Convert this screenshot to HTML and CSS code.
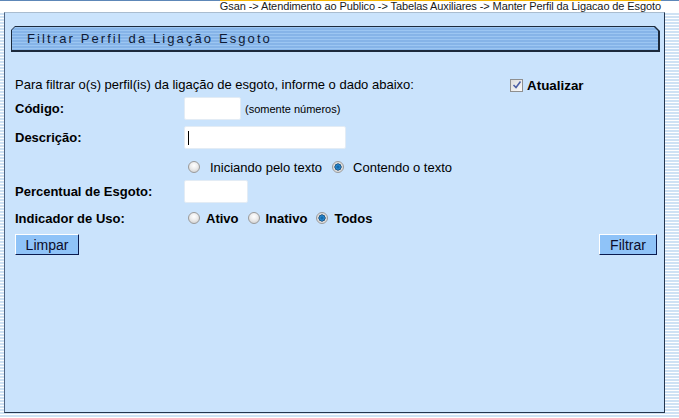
FILE: index.html
```html
<!DOCTYPE html>
<html lang="pt">
<head>
<meta charset="utf-8">
<title>Filtrar Perfil da Ligação Esgoto</title>
<link rel="stylesheet" href="styles.css">
</head>
<body>
<div class="topline"></div>
<div class="crumb-row">
  <div class="crumb">Gsan -&gt; Atendimento ao Publico -&gt; Tabelas Auxiliares -&gt; Manter Perfil da Ligacao de Esgoto</div>
</div>
<div class="panel">
  <div class="tab"><div class="tab-inner">Filtrar Perfil da Ligação Esgoto</div></div>

  <div class="row row-intro">
    <span class="intro">Para filtrar o(s) perfil(is) da ligação de esgoto, informe o dado abaixo:</span>
    <span class="update"><span class="checkbox"><svg width="10" height="10" viewBox="0 0 10 10"><path d="M1.5 5 L4 7.5 L8.5 1.5" fill="none" stroke="#4b5fa6" stroke-width="1.6"/></svg></span><b>Atualizar</b></span>
  </div>

  <div class="row row-codigo">
    <label class="lbl">Código:</label>
    <span class="field f-codigo"></span>
    <span class="hint">(somente números)</span>
  </div>

  <div class="row row-desc">
    <label class="lbl">Descrição:</label>
    <span class="field f-desc"><span class="caret"></span></span>
  </div>

  <div class="row row-radio">
    <span class="lbl"></span>
    <span class="radio"></span><span class="rtext r-ini">Iniciando pelo texto</span>
    <span class="radio on"></span><span class="rtext">Contendo o texto</span>
  </div>

  <div class="row row-perc">
    <label class="lbl">Percentual de Esgoto:</label>
    <span class="field f-perc"></span>
  </div>

  <div class="row row-uso">
    <label class="lbl">Indicador de Uso:</label>
    <span class="radio"></span><b class="rtext">Ativo</b>
    <span class="radio"></span><b class="rtext">Inativo</b>
    <span class="radio on"></span><b class="rtext">Todos</b>
  </div>

  <div class="row row-buttons">
    <span class="btn btn-limpar">Limpar</span>
    <span class="btn btn-filtrar">Filtrar</span>
  </div>
</div>
<div class="bottom-stripes"></div>
</body>
</html>
```
FILE: styles.css
```css
html, body {
  margin: 0;
  padding: 0;
}
body {
  width: 679px;
  height: 418px;
  overflow: hidden;
  font-family: "Liberation Sans", Arial, sans-serif;
  color: #000;
  background: repeating-linear-gradient(to bottom, #ffffff 0, #ffffff 1px, #cfe2f4 1px, #cfe2f4 3px);
}
.topline {
  height: 1px;
  background: #5d87b8;
}
.crumb-row {
  height: 11px;
  background: #fff;
  display: flex;
  justify-content: flex-end;
  padding-right: 18px;
}
.crumb {
  font-size: 11px;
  letter-spacing: -0.1px;
  line-height: 10px;
  color: #1a1a1a;
  padding-left: 250px;
  margin-top: -1px;
  white-space: nowrap;
  border-top: 1px solid #f5b400;
  border-image: linear-gradient(to right, transparent 0, transparent 250px, #f5b400 250px) 1;
}
.panel {
  margin-left: 4px;
  background: #cae3fc;
  border: 1px solid #24364f;
  border-top-color: #a9bccf;
  border-left-color: #4f6482;
  padding: 13px 4px 0 6px;
  box-sizing: border-box;
  width: 661px;
  height: 401px;
}
.tab {
  height: 26px;
  background: #1c2a3c;
  padding: 1px 2px 2px 1px;
  box-sizing: border-box;
  clip-path: polygon(4px 0, calc(100% - 5px) 0, 100% 5px, 100% 100%, 0 100%, 0 4px);
}
.tab-inner {
  height: 100%;
  background: repeating-linear-gradient(to bottom, #9cc6f2 0, #9cc6f2 1px, #86b4e8 1px, #86b4e8 3px);
  clip-path: polygon(3px 0, calc(100% - 4px) 0, 100% 4px, 100% 100%, 0 100%, 0 3px);
  font-size: 13px;
  letter-spacing: 2.1px;
  color: #0e1a36;
  line-height: 23px;
  padding-left: 15px;
}
.row {
  display: flex;
  align-items: center;
  padding-left: 4px;
}
.lbl {
  width: 169px;
  flex: none;
  font-weight: bold;
  font-size: 13px;
}
.row-intro {
  margin-top: 22px;
  height: 20px;
  font-size: 13px;
}
.intro {
  width: 495px;
  flex: none;
}
.update {
  display: flex;
  align-items: center;
  font-size: 13.4px;
  margin-top: 2px;
}
.checkbox {
  width: 11px;
  height: 11px;
  border: 1px solid #8f8f8f;
  background: linear-gradient(135deg, #dcdcdc, #fafafa);
  display: flex;
  align-items: center;
  justify-content: center;
  margin-right: 4px;
  box-sizing: content-box;
}
.field {
  display: block;
  background: #fff;
  border: 1px solid #e3ecf5;
  border-radius: 2px;
  box-sizing: border-box;
  height: 23px;
  flex: none;
}
.f-codigo { width: 57px; }
.f-desc { width: 162px; position: relative; }
.f-perc { width: 64px; }
.caret {
  position: absolute;
  left: 3px;
  top: 4px;
  width: 1px;
  height: 14px;
  background: #000;
}
.hint {
  font-size: 11px;
  margin-left: 4px;
}
.row-codigo { margin-top: 3px; height: 23px; }
.row-desc { margin-top: 6px; height: 23px; }
.row-radio { margin-top: 8px; height: 20px; font-size: 13px; }
.row-perc { margin-top: 3px; height: 23px; }
.row-uso { margin-top: 5px; height: 20px; font-size: 13px; }
.radio {
  flex: none;
  box-sizing: border-box;
  width: 12px;
  height: 12px;
  border-radius: 50%;
  border: 1px solid #9a9a9a;
  background: radial-gradient(circle at 50% 35%, #ffffff 0, #ececec 45%, #c9c9c9 100%);
}
.radio.on {
  background: radial-gradient(circle at 50% 50%, #0b5d9c 0, #2a8ad0 2.3px, #0e3f6c 3.3px, #d8d8d8 3.8px, #f5f5f5 100%);
}
.row-radio .radio { margin-left: 4px; margin-right: 10px; }
.row-radio .radio.on { margin-left: 0; margin-right: 9px; }
.r-ini { margin-right: 10px; }
.row-uso .radio { margin-left: 4px; margin-right: 6px; }
.row-uso .rtext { margin-right: 5px; }
.row-buttons {
  margin-top: 6px;
  height: 21px;
  justify-content: space-between;
  padding-right: 3px;
}
.btn {
  display: flex;
  align-items: center;
  justify-content: center;
  height: 21px;
  box-sizing: border-box;
  background: #8fc3f8;
  border: 1px solid #0b1b4f;
  border-top-color: #ffffff;
  border-left-color: #ffffff;
  font-size: 14px;
  color: #0c0c2a;
}
.btn-limpar { width: 64px; }
.btn-filtrar { width: 58px; }
.bottom-stripes { height: 5px; }
```
